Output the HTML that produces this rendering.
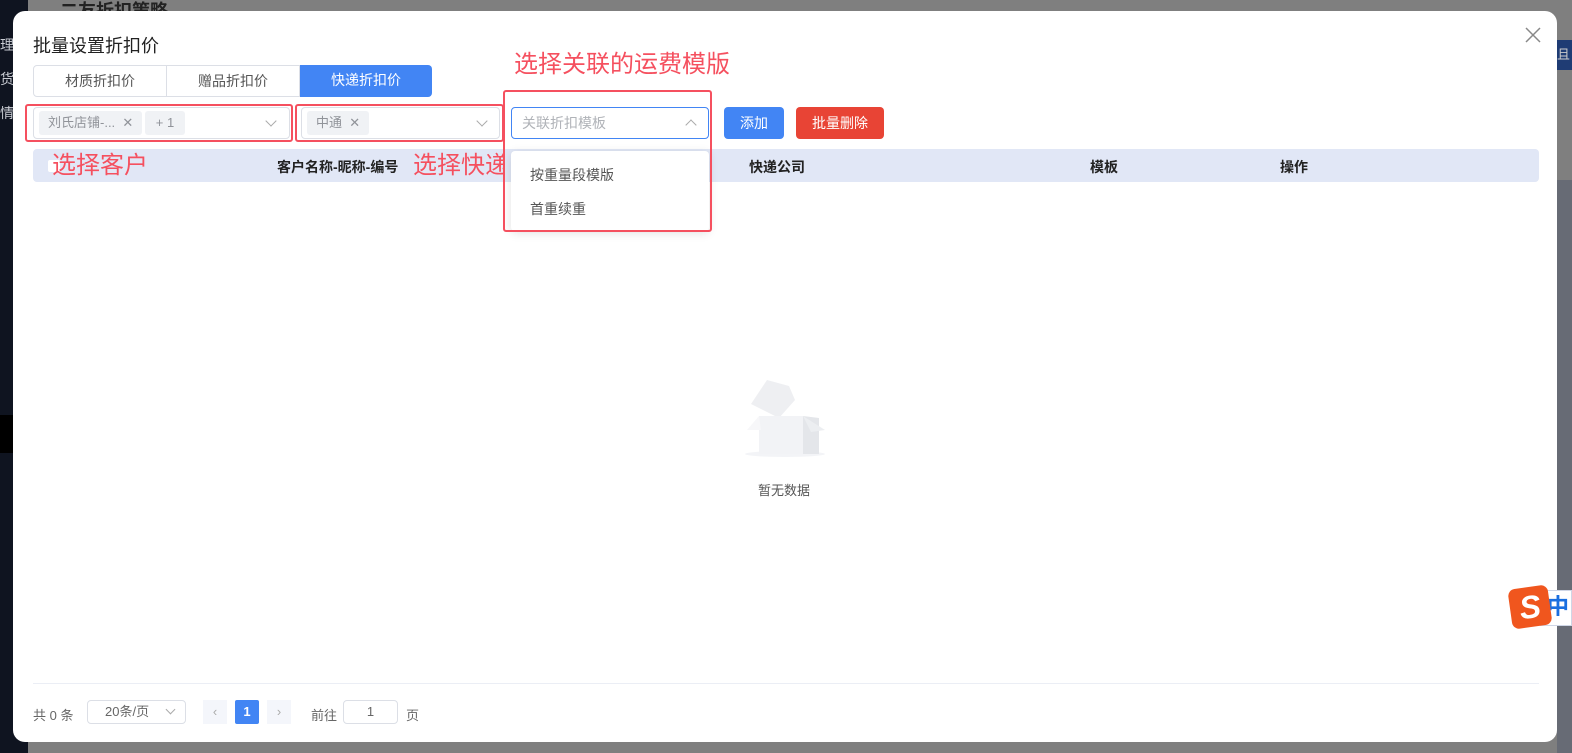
<!DOCTYPE html>
<html><head><meta charset="utf-8"><style>
*{box-sizing:border-box;margin:0;padding:0}
body{width:1572px;height:753px;overflow:hidden;background:#7f7f7f;font-family:"Liberation Sans","Noto Sans CJK SC",sans-serif;position:relative;color:#333}
.abs{position:absolute}
.side{left:0;top:0;width:28px;height:753px;background:#0f1420}
.modal{left:13px;top:11px;width:1544px;height:731px;background:#fff;border-radius:12px}
.red{border:2px solid #f5505f;border-radius:3px}
.redt{color:#f5505f;font-size:24px;line-height:30px}
.sel{border:1px solid #dcdfe6;border-radius:4px;background:#fff}
.tag{background:#f0f2f5;color:#909399;font-size:13px;border-radius:3px;height:24px;line-height:24px;padding:0 9px}
.chev{width:8px;height:8px;border-right:1px solid #aaa;border-bottom:1px solid #aaa;transform:rotate(45deg)}
.th{top:157px;font-size:14px;font-weight:bold;color:#222}
</style></head><body>
<div class="abs side"></div>
<div class="abs" style="left:0;top:28px;color:#c9ccd3;font-size:14px;line-height:34px;width:14px">理<br>货<br>情</div>
<div class="abs" style="left:0;top:415px;width:13px;height:38px;background:#000"></div>
<div class="abs" style="left:60px;top:0;font-size:18px;font-weight:bold;color:#222;height:11px;overflow:hidden;line-height:22px">二友折扣策略</div>
<div class="abs" style="left:1557px;top:40px;width:15px;height:30px;background:#1f3c74;color:#ccc;font-size:13px;line-height:30px">且</div>
<div class="abs" style="left:1557px;top:180px;width:15px;height:573px;background:#676b75"></div>
<div class="abs modal"></div>
<div class="abs" style="left:33px;top:32px;font-size:18px;color:#222">批量设置折扣价</div>
<svg class="abs" style="left:1524px;top:26px" width="18" height="18"><path d="M2 2L16 16M16 2L2 16" stroke="#888" stroke-width="1.5"/></svg>
<div class="abs" style="left:33px;top:65px;width:399px;height:32px;display:flex;font-size:14px;line-height:30px;text-align:center">
<div style="flex:1;border:1px solid #dcdfe6;border-radius:4px 0 0 4px;color:#555">材质折扣价</div>
<div style="flex:1;border:1px solid #dcdfe6;border-left:0;color:#555">赠品折扣价</div>
<div style="flex:1;background:#4285f4;color:#fff;border-radius:0 4px 4px 0">快递折扣价</div></div>
<div class="abs sel" style="left:33px;top:107px;width:257px;height:32px"></div>
<div class="abs tag" style="left:39px;top:111px">刘氏店铺-... &nbsp;✕</div>
<div class="abs tag" style="left:145px;top:111px;width:40px;text-align:center">+ 1</div>
<div class="abs chev" style="left:267px;top:117px"></div>
<div class="abs sel" style="left:301px;top:107px;width:199px;height:32px"></div>
<div class="abs tag" style="left:307px;top:111px">中通 &nbsp;✕</div>
<div class="abs chev" style="left:478px;top:117px"></div>
<div class="abs red" style="left:25px;top:104px;width:268px;height:38px"></div>
<div class="abs red" style="left:295px;top:104px;width:209px;height:38px"></div>
<div class="abs" style="left:33px;top:149px;width:1506px;height:33px;background:#e1e7f6;border-radius:4px"></div>
<div class="abs" style="left:48px;top:160px;width:12px;height:12px;background:#fff;border-radius:2px"></div>
<div class="abs th" style="left:277px">客户名称-昵称-编号</div>
<div class="abs th" style="left:749px">快递公司</div>
<div class="abs th" style="left:1090px">模板</div>
<div class="abs th" style="left:1280px">操作</div>
<div class="abs redt" style="left:52px;top:151px">选择客户</div>
<div class="abs redt" style="left:413px;top:151px;width:92px;overflow:hidden;white-space:nowrap">选择快递</div>
<div class="abs redt" style="left:514px;top:50px">选择关联的运费模版</div>
<div class="abs sel" style="left:511px;top:107px;width:198px;height:32px;border-color:#4285f4;font-size:14px;color:#b0b3b8;line-height:30px;padding-left:10px">关联折扣模板</div>
<div class="abs chev" style="left:687px;top:121px;transform:rotate(-135deg)"></div>
<div class="abs" style="left:511px;top:151px;width:198px;height:80px;background:#fff;box-shadow:0 2px 10px rgba(0,0,0,.12);border-radius:4px;font-size:14px;color:#555">
<div style="position:absolute;left:19px;top:14px">按重量段模版</div><div style="position:absolute;left:19px;top:48px">首重续重</div></div>
<div class="abs red" style="left:503px;top:90px;width:209px;height:142px"></div>
<div class="abs" style="left:724px;top:107px;width:60px;height:32px;background:#4285f4;color:#fff;border-radius:4px;font-size:14px;text-align:center;line-height:32px">添加</div>
<div class="abs" style="left:796px;top:107px;width:88px;height:32px;background:#e84435;color:#fff;border-radius:4px;font-size:14px;text-align:center;line-height:32px">批量删除</div>
<svg class="abs" style="left:745px;top:378px" width="82" height="80">
<ellipse cx="40" cy="76" rx="40" ry="3" fill="#f3f4f7"/>
<path d="M6 26L22 2L44 8L50 22L34 40Z" fill="#eeeff2"/>
<rect x="14" y="38" width="44" height="38" fill="#f2f3f6"/>
<path d="M58 38L74 40L74 76L58 76Z" fill="#e4e6ea"/>
<path d="M14 38L2 52L16 52Z" fill="#f7f7f9"/><path d="M58 38L80 52L66 54Z" fill="#eceef1"/>
</svg>
<div class="abs" style="left:758px;top:480px;font-size:13px;color:#555">暂无数据</div>
<div class="abs" style="left:33px;top:683px;width:1506px;height:1px;background:#ebeef5"></div>
<div class="abs" style="left:33px;top:705px;font-size:13px;color:#666">共 0 条</div>
<div class="abs sel" style="left:87px;top:700px;width:99px;height:24px;font-size:13px;color:#666;line-height:22px;padding-left:17px">20条/页</div>
<div class="abs chev" style="left:167px;top:706px;width:7px;height:7px"></div>
<div class="abs" style="left:203px;top:700px;width:24px;height:24px;background:#f4f6fb;color:#aaa;text-align:center;line-height:24px;font-size:13px">‹</div>
<div class="abs" style="left:235px;top:700px;width:24px;height:24px;background:#4285f4;color:#fff;text-align:center;line-height:24px;font-size:13px;font-weight:bold;border-radius:2px">1</div>
<div class="abs" style="left:267px;top:700px;width:24px;height:24px;background:#f4f6fb;color:#aaa;text-align:center;line-height:24px;font-size:13px">›</div>
<div class="abs" style="left:311px;top:705px;font-size:13px;color:#666">前往</div>
<div class="abs sel" style="left:343px;top:700px;width:55px;height:24px;font-size:13px;color:#666;text-align:center;line-height:22px">1</div>
<div class="abs" style="left:406px;top:705px;font-size:13px;color:#666">页</div>
<div class="abs" style="left:1540px;top:590px;width:32px;height:36px;background:#fff;border:1px solid #cfd6e6;color:#1a6fe0;font-size:22px;font-weight:bold;line-height:32px;padding-left:6px">中</div>
<div class="abs" style="left:1510px;top:587px;width:40px;height:40px;background:#f0561e;border-radius:7px;transform:rotate(-8deg);color:#fff;font-size:32px;font-weight:bold;text-align:center;line-height:40px;font-style:italic">S</div>
</body></html>
